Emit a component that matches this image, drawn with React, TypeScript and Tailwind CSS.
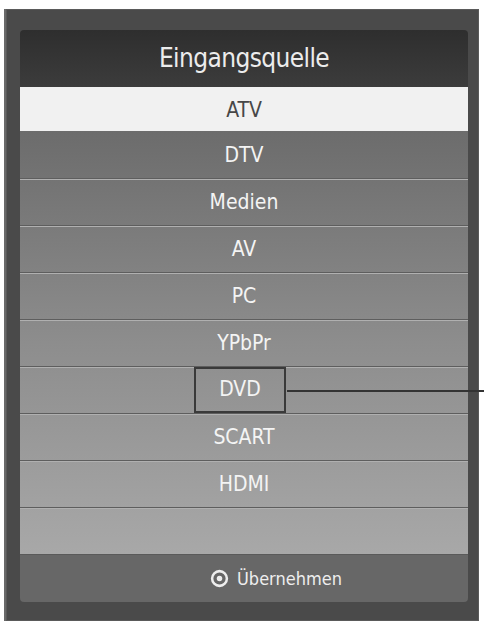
const SOURCES = ["DTV", "Medien", "AV", "PC", "YPbPr", "DVD", "SCART", "HDMI", ""];

const FONT = { fontFamily: '"DejaVu Sans", sans-serif' };

export default function App() {
  return (
    <div className="relative w-[484px] h-[626px] bg-white pt-[9px] pl-[4px] font-stretch-condensed" style={FONT}>
      <div className="w-[475px] h-[612px] bg-[#4a4a4a] border-l-2 border-[#6a6a6a] pl-[14px] pr-[11px] pt-[21px] shadow-[inset_0_0_0_1px_#5a5a5a]">
        <div className="w-[448px] rounded-[4px] overflow-hidden">
          <div className="h-[57px] bg-gradient-to-b from-[#2e2e2e] to-[#3c3c3c] flex items-center justify-center text-[26px] text-[#ececec] tracking-[-0.6px]">
            Eingangsquelle
          </div>
          <div className="h-[44px] pt-[3px] bg-[#f1f1f1] flex items-center justify-center text-[21px] text-[#474747]">
            ATV
          </div>
          <div className="bg-gradient-to-b from-[#6c6c6c] via-[#8d8d8d] to-[#a8a8a8]">
            {SOURCES.map((s, i) => (
              <div
                key={i}
                className={`h-[47px] pt-[2px] flex items-center justify-center text-[21px] text-[#f4f4f4] ${
                  i > 0 ? "border-t border-[#5e5e5e] shadow-[inset_0_1px_0_#b0b0b0]" : ""
                }`}
              >
                {s === "DVD" ? (
                  <span className="w-[92px] h-[46px] -mt-[2px] border-2 border-[#3a3a3a] flex items-center justify-center -ml-[8px]">
                    DVD
                  </span>
                ) : (
                  s
                )}
              </div>
            ))}
          </div>
          <div className="h-[48px] pl-[64px] bg-[#676767] border-t border-[#5a5a5a] flex items-center justify-center gap-[8px] text-[18px] text-[#eeeeee]">
            <svg width="19" height="19" viewBox="0 0 18 18">
              <circle cx="9" cy="9" r="7" fill="none" stroke="#eeeeee" strokeWidth="2.4" />
              <circle cx="9" cy="9" r="2.6" fill="#eeeeee" />
            </svg>
            <span>Übernehmen</span>
          </div>
        </div>
      </div>
      <div className="absolute left-[287px] top-[390px] w-[197px] h-[2px] bg-[#333333]" />
    </div>
  );
}
